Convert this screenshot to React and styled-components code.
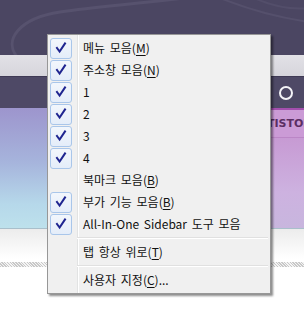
import React from "react";
import styled, { createGlobalStyle } from "styled-components";

const Global = createGlobalStyle`
  html, body { margin: 0; padding: 0; }
  body { width: 304px; height: 314px; overflow: hidden; background: #fff; }
  #root { position: relative; width: 304px; height: 314px; }
`;

const Page = styled.div`
  position: relative;
  width: 304px;
  height: 314px;
  display: flex;
  flex-direction: column;
  overflow: hidden;
`;

const TitleBar = styled.div`
  position: relative;
  height: 55px;
  background: #4b4662;
  overflow: hidden;
  svg { display: block; }
`;

const NavBar = styled.div`
  height: 21px;
  background: linear-gradient(#e2e1e6, #d6d5dc);
  border-bottom: 1px solid #3f3a55;
`;

const ToolBar = styled.div`
  height: 31px;
  background: #4e4966;
  display: flex;
  align-items: center;
  justify-content: flex-end;
  padding-right: 11px;
`;

const Ring = styled.div`
  width: 10px;
  height: 10px;
  border: 2px solid #f4f4f8;
  border-radius: 50%;
`;

const Content = styled.div`
  height: 120px;
  display: flex;
  border-bottom: 1px solid #a9bfcb;
`;

const LeftPane = styled.div`
  flex: 1;
  background: linear-gradient(#9d95cd 0%, #a6b4dc 45%, #b6d8ea 80%, #bde1ec 100%);
`;

const RightPane = styled.div`
  width: 38px;
  display: flex;
  flex-direction: column;
  background: linear-gradient(#c48ecd, #cdb2e0 70%, #c8b6de 100%);
  border-top: 2px solid #a34fae;
`;

const Banner = styled.div`
  height: 27px;
  background: #cb9bd6;
  border-bottom: 1px solid #bb86c6;
  display: flex;
  align-items: center;
  padding-left: 1px;
  font: bold 11px "DejaVu Sans", sans-serif;
  color: #5b2e63;
  white-space: nowrap;
  overflow: hidden;
`;

const Footer = styled.div`
  flex: 1;
  background: linear-gradient(#ececec, #ffffff 30px);
  padding-top: 33px;
`;

const Hatch = styled.div`
  height: 5px;
  background: repeating-linear-gradient(45deg, #c8c8c8 0 1px, #f4f4f4 1px 2px);
`;

const Menu = styled.div`
  position: absolute;
  left: 47px;
  top: 34px;
  width: 218px;
  padding: 2px;
  border: 1px solid #979797;
  background:
    linear-gradient(to right, transparent 29px, #e2e3e3 29px, #e2e3e3 30px, #ffffff 30px, #ffffff 31px, transparent 31px),
    #f0f0f0;
  box-shadow: 2px 2px 2px rgba(0, 0, 0, 0.45);
  font-family: "Noto Sans CJK KR", "DejaVu Sans", sans-serif;
  font-size: 12px;
  color: #111;
`;

const Item = styled.div`
  height: 22px;
  display: flex;
  align-items: center;
`;

const Gutter = styled.div`
  width: 27px;
  height: 22px;
  display: flex;
  align-items: center;
`;

const CheckBox = styled.div`
  width: 20px;
  height: 19px;
  border: 1px solid #a9c6ea;
  border-radius: 3px;
  background: linear-gradient(#f2f6fc, #e4edf9);
  display: flex;
  align-items: center;
  justify-content: center;
`;

const Label = styled.div`
  padding-left: 6px;
  white-space: nowrap;
  line-height: 22px;
  word-spacing: 2px;
`;

const Key = styled.span`
  text-decoration: underline;
  text-underline-offset: 2px;
  text-decoration-thickness: 1px;
`;

const Separator = styled.div`
  height: 6px;
  margin-left: 27px;
  display: flex;
  flex-direction: column;
  justify-content: center;
  &::before {
    content: "";
    display: block;
    height: 1px;
    background: #e0e0e0;
  }
  &::after {
    content: "";
    display: block;
    height: 1px;
    background: #ffffff;
  }
`;

const Check = () => (
  <svg width="12" height="12" viewBox="0 0 12 12">
    <path d="M2 6 L4.6 9.5 L10 1.5" fill="none" stroke="#1f2590" strokeWidth="2" strokeLinecap="square" strokeLinejoin="miter" />
  </svg>
);

const label = (text, key, after = "") =>
  key ? (
    <>
      {text}(<Key>{key}</Key>){after}
    </>
  ) : (
    text
  );

const items = [
  { t: "메뉴 모음", k: "M", c: true },
  { t: "주소창 모음", k: "N", c: true },
  { t: "1", c: true },
  { t: "2", c: true },
  { t: "3", c: true },
  { t: "4", c: true },
  { t: "북마크 모음", k: "B", c: false },
  { t: "부가 기능 모음", k: "B", c: true },
  { t: "All-In-One Sidebar 도구 모음", c: true },
];

export default function App() {
  return (
    <>
      <Global />
      <Page>
        <TitleBar>
          <svg width="304" height="55" viewBox="0 0 304 55">
            <path d="M18 58 C 2 40, 20 18, 60 12 C 100 6, 140 4, 200 -4" fill="none" stroke="#57526e" strokeWidth="3" />
            <path d="M220 -2 C 250 10, 280 18, 310 22" fill="none" stroke="#55506c" strokeWidth="2" />
            <path d="M250 -4 C 270 6, 290 10, 310 8" fill="none" stroke="#534e6a" strokeWidth="2" />
          </svg>
        </TitleBar>
        <NavBar />
        <ToolBar>
          <Ring />
        </ToolBar>
        <Content>
          <LeftPane />
          <RightPane>
            <Banner>TISTORY</Banner>
          </RightPane>
        </Content>
        <Footer>
          <Hatch />
        </Footer>
        <Menu>
          {items.map((it, i) => (
            <Item key={i}>
              <Gutter>
                {it.c && (
                  <CheckBox>
                    <Check />
                  </CheckBox>
                )}
              </Gutter>
              <Label>{label(it.t, it.k)}</Label>
            </Item>
          ))}
          <Separator />
          <Item>
            <Gutter />
            <Label>{label("탭 항상 위로", "T")}</Label>
          </Item>
          <Separator />
          <Item>
            <Gutter />
            <Label>{label("사용자 지정", "C", "...")}</Label>
          </Item>
        </Menu>
      </Page>
    </>
  );
}
